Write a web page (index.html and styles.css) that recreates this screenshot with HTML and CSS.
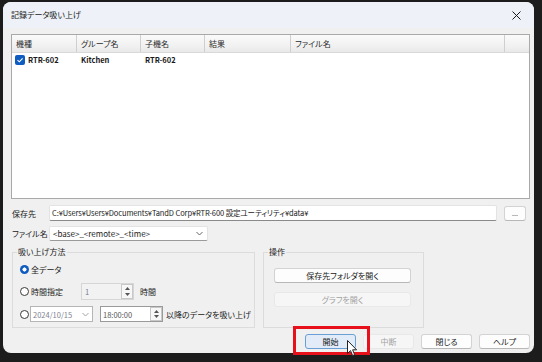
FILE: index.html
```html
<!DOCTYPE html>
<html lang="ja">
<head>
<meta charset="utf-8">
<title>記録データ吸い上げ</title>
<link rel="stylesheet" href="styles.css">
</head>
<body>
<div class="screen">
  <div class="window">
    <div class="titlebar">
      <span class="title">記録データ吸い上げ</span>
      <svg class="close" width="9" height="9" viewBox="0 0 9 9"><path d="M0.5 0.5L8.5 8.5M8.5 0.5L0.5 8.5" stroke="#1a1a1a" stroke-width="1"/></svg>
    </div>
    <div class="content">
      <div class="list">
        <div class="list-head">
          <div class="cell c1">機種</div>
          <div class="cell c2">グループ名</div>
          <div class="cell c3">子機名</div>
          <div class="cell c4">結果</div>
          <div class="cell c5">ファイル名</div>
          <div class="cell c6"></div>
        </div>
        <div class="list-row">
          <div class="cell c1 first"><span class="check"><svg width="8" height="8" viewBox="0 0 8 8"><path d="M1.5 4.2L3.3 5.8L6.6 2.3" fill="none" stroke="#fff" stroke-width="1.1"/></svg></span>RTR-602</div>
          <div class="cell c2">Kitchen</div>
          <div class="cell c3">RTR-602</div>
          <div class="cell c4"></div>
          <div class="cell c5"></div>
          <div class="cell c6"></div>
        </div>
      </div>

      <div class="pathrow">
        <span class="label">保存先</span>
        <div class="textbox">C:¥Users¥Users¥Documents¥TandD Corp¥RTR-600 設定ユーティリティ¥data¥</div>
        <div class="btn dots">...</div>
      </div>

      <div class="filerow">
        <span class="label">ファイル名</span>
        <div class="combo"><span>&lt;base&gt;_&lt;remote&gt;_&lt;time&gt;</span>
          <svg width="7" height="5" viewBox="0 0 7 5"><path d="M0.5 1L3.5 4L6.5 1" fill="none" stroke="#555" stroke-width="0.9"/></svg>
        </div>
      </div>

      <div class="groups">
        <div class="group g1">
          <div class="group-title">吸い上げ方法</div>
          <div class="opt r1"><span class="radio on"></span><span>全データ</span></div>
          <div class="opt r2">
            <span class="radio"></span><span class="optlabel">時間指定</span>
            <div class="spin disabled"><span class="val">1</span>
              <div class="spinbtn">
                <svg width="5" height="3" viewBox="0 0 5 3"><path d="M0 3L2.5 0L5 3Z" fill="#555"/></svg>
                <svg width="5" height="3" viewBox="0 0 5 3"><path d="M0 0L2.5 3L5 0Z" fill="#555"/></svg>
              </div>
            </div>
            <span class="unit">時間</span>
          </div>
          <div class="opt r3">
            <span class="radio"></span>
            <div class="datebox"><span>2024/10/15</span>
              <svg width="7" height="5" viewBox="0 0 7 5"><path d="M0.5 1L3.5 4L6.5 1" fill="none" stroke="#999" stroke-width="0.9"/></svg>
            </div>
            <div class="timebox"><span>18:00:00</span>
              <div class="spinbtn">
                <svg width="5" height="3" viewBox="0 0 5 3"><path d="M0 3L2.5 0L5 3Z" fill="#555"/></svg>
                <svg width="5" height="3" viewBox="0 0 5 3"><path d="M0 0L2.5 3L5 0Z" fill="#555"/></svg>
              </div>
            </div>
            <span class="after">以降のデータを吸い上げ</span>
          </div>
        </div>
        <div class="group g2">
          <div class="group-title">操作</div>
          <div class="btn wide first">保存先フォルダを開く</div>
          <div class="btn wide disabled second">グラフを開く</div>
        </div>
      </div>

      <div class="buttons">
        <div class="btn act primary">開始</div>
        <div class="btn act disabled">中断</div>
        <div class="btn act">閉じる</div>
        <div class="btn act">ヘルプ</div>
      </div>
    </div>
  </div>
  <div class="highlight"></div>
  <svg class="cursor" width="11" height="17" viewBox="0 0 11 17"><path d="M0.5 0.5L0.5 13.5L3.5 10.6L5.6 15.6L7.7 14.7L5.6 9.8L9.6 9.8Z" fill="#fff" stroke="#222" stroke-width="1" stroke-linejoin="round"/></svg>
</div>
</body>
</html>
```

FILE: styles.css
```css
* { box-sizing: border-box; }
html, body { margin: 0; padding: 0; }
body {
  width: 542px;
  height: 362px;
  overflow: hidden;
  background: #1c1c1c;
  font-family: "Noto Sans CJK JP", "Noto Sans", sans-serif;
  font-feature-settings: "palt";
  font-size: 8px;
  color: #1a1a1a;
}
.screen {
  position: relative;
  width: 542px;
  height: 362px;
  padding: 2px 8px 9px 3px;
}
.window {
  width: 531px;
  height: 351px;
  background: #f0f0f0;
  border-radius: 8px;
  overflow: hidden;
  display: flex;
  flex-direction: column;
}
.titlebar {
  height: 26px;
  flex: none;
  background: #eef2f8;
  display: flex;
  align-items: center;
  justify-content: space-between;
  padding: 0 13px 0 8px;
}
.title { font-size: 8px; line-height: 12px; color: #1a1a1a; }
.content {
  flex: 1;
  display: flex;
  flex-direction: column;
  padding: 6px 4px 4px 8px;
}
.list {
  height: 165px;
  flex: none;
  border: 1px solid #a9a9a9;
  background: #fff;
}
.list-head, .list-row { display: flex; }
.list-head {
  height: 18px;
  background: linear-gradient(#fafafa, #f0f0f0 70%, #e8e8e8);
  border-bottom: 1px solid #d9d9d9;
}
.cell {
  flex: none;
  display: flex;
  align-items: center;
  padding-left: 4px;
  white-space: nowrap;
  overflow: hidden;
}
.list-head .cell { border-right: 1px solid #cfcfcf; color: #2a2a2a; line-height: 17px; }
.list-head .c6 { border-right: none; }
.c1 { width: 65px; }
.c2 { width: 64px; }
.c3 { width: 64px; }
.c4 { width: 86px; }
.c5 { width: 214px; }
.c6 { flex: 1; }
.list-row { height: 13px; font-weight: 700; font-size: 7.5px; }
.list-row .cell { line-height: 13px; }
.list-row .first { padding-left: 3px; }
.check {
  width: 10px; height: 10px;
  border-radius: 2px;
  background: #0f5cc0;
  display: inline-flex;
  align-items: center;
  justify-content: center;
  margin-right: 3px;
}
.pathrow, .filerow { display: flex; align-items: center; flex: none; }
.pathrow { margin-top: 6px; height: 16px; }
.filerow { margin-top: 5px; height: 15px; }
.label { width: 38px; padding-left: 1px; flex: none; white-space: nowrap; }
.textbox {
  width: 448px;
  height: 16px;
  background: #fff;
  border: 1px solid #e3e3e3;
  border-bottom-color: #8a8a8a;
  border-radius: 2px;
  padding-left: 2px;
  font-size: 7.5px;
  letter-spacing: -0.1px;
  line-height: 14px;
  white-space: nowrap;
  overflow: hidden;
}
.btn {
  display: flex;
  align-items: center;
  justify-content: center;
  background: #fdfdfd;
  border: 1px solid #d3d3d3;
  border-bottom-color: #b8b8b8;
  border-radius: 3px;
  height: 15px;
  line-height: 13px;
  color: #1a1a1a;
  white-space: nowrap;
}
.btn.disabled {
  background: #f6f6f6;
  border-color: #e8e8e8;
  color: #a3a3a3;
}
.dots { width: 22px; margin-left: 7px; font-size: 7px; color: #444; }
.combo {
  width: 159px;
  height: 15px;
  background: #fff;
  border: 1px solid #e3e3e3;
  border-bottom-color: #9a9a9a;
  border-radius: 2px;
  display: flex;
  align-items: center;
  justify-content: space-between;
  padding: 0 4px 0 3px;
  font-size: 8px;
}
.groups {
  display: flex;
  gap: 8px;
  margin-top: 11px;
  padding-left: 1px;
  flex: none;
}
.group {
  height: 76px;
  border: 1px solid #dcdcdc;
  display: flex;
  flex-direction: column;
}
.g1 { width: 243px; padding-left: 7px; }
.g2 { width: 161px; padding-left: 10px; }
.group-title {
  margin-top: -7px;
  margin-left: -3px;
  width: fit-content;
  padding: 0 1px;
  background: #f0f0f0;
  line-height: 11px;
  height: 11px;
}
.g2 .group-title { margin-left: -6px; }
.opt { display: flex; align-items: center; white-space: nowrap; }
.r1 { margin-top: 5px; height: 14px; }
.r2 { margin-top: 7px; height: 17px; }
.r3 { margin-top: 6px; height: 16px; }
.radio {
  width: 9px; height: 9px;
  border-radius: 50%;
  border: 1px solid #3a3a3a;
  background: #fff;
  margin-right: 2px;
  flex: none;
}
.radio.on {
  border: none;
  background: radial-gradient(circle, #fff 0 1.8px, #0f5cc0 2.3px);
}
.optlabel { width: 50px; }
.spin {
  width: 53px;
  height: 17px;
  border: 1px solid #d6d6d6;
  background: #f2f2f2;
  display: flex;
  align-items: center;
  justify-content: space-between;
  padding: 0 0 0 3px;
  color: #6f7a96;
  font-size: 7.5px;
}
.spinbtn {
  width: 12px;
  height: 100%;
  border: 1px solid #c8c8c8;
  background: #f7f7f7;
  display: flex;
  flex-direction: column;
  align-items: center;
  justify-content: space-around;
  padding: 1px 0;
}
.unit { margin-left: 6px; }
.datebox, .timebox {
  width: 63px;
  height: 16px;
  background: #fff;
  border: 1px solid #b5b5b5;
  display: flex;
  align-items: center;
  justify-content: space-between;
  font-size: 7.5px;
}
.datebox { margin-left: -1px; padding: 0 3px 0 2px; color: #7d8290; }
.timebox { margin-left: 7px; padding-left: 2px; color: #555; border-color: #9a9a9a; }
.after { margin-left: 3px; white-space: nowrap; }
.wide { width: 137px; }
.g2 .first { margin-top: 11px; }
.g2 .second { margin-top: 9px; }
.buttons {
  margin-top: auto;
  display: flex;
  justify-content: flex-end;
  gap: 7px;
  flex: none;
}
.act { width: 51px; }
.btn.primary {
  background: #e1ecf8;
  border-color: #6a9fd6;
}
.highlight {
  position: absolute;
  left: 293px;
  top: 326px;
  width: 77px;
  height: 29px;
  border: 3px solid #e8111b;
}
.cursor {
  position: absolute;
  left: 347px;
  top: 340px;
}
```
